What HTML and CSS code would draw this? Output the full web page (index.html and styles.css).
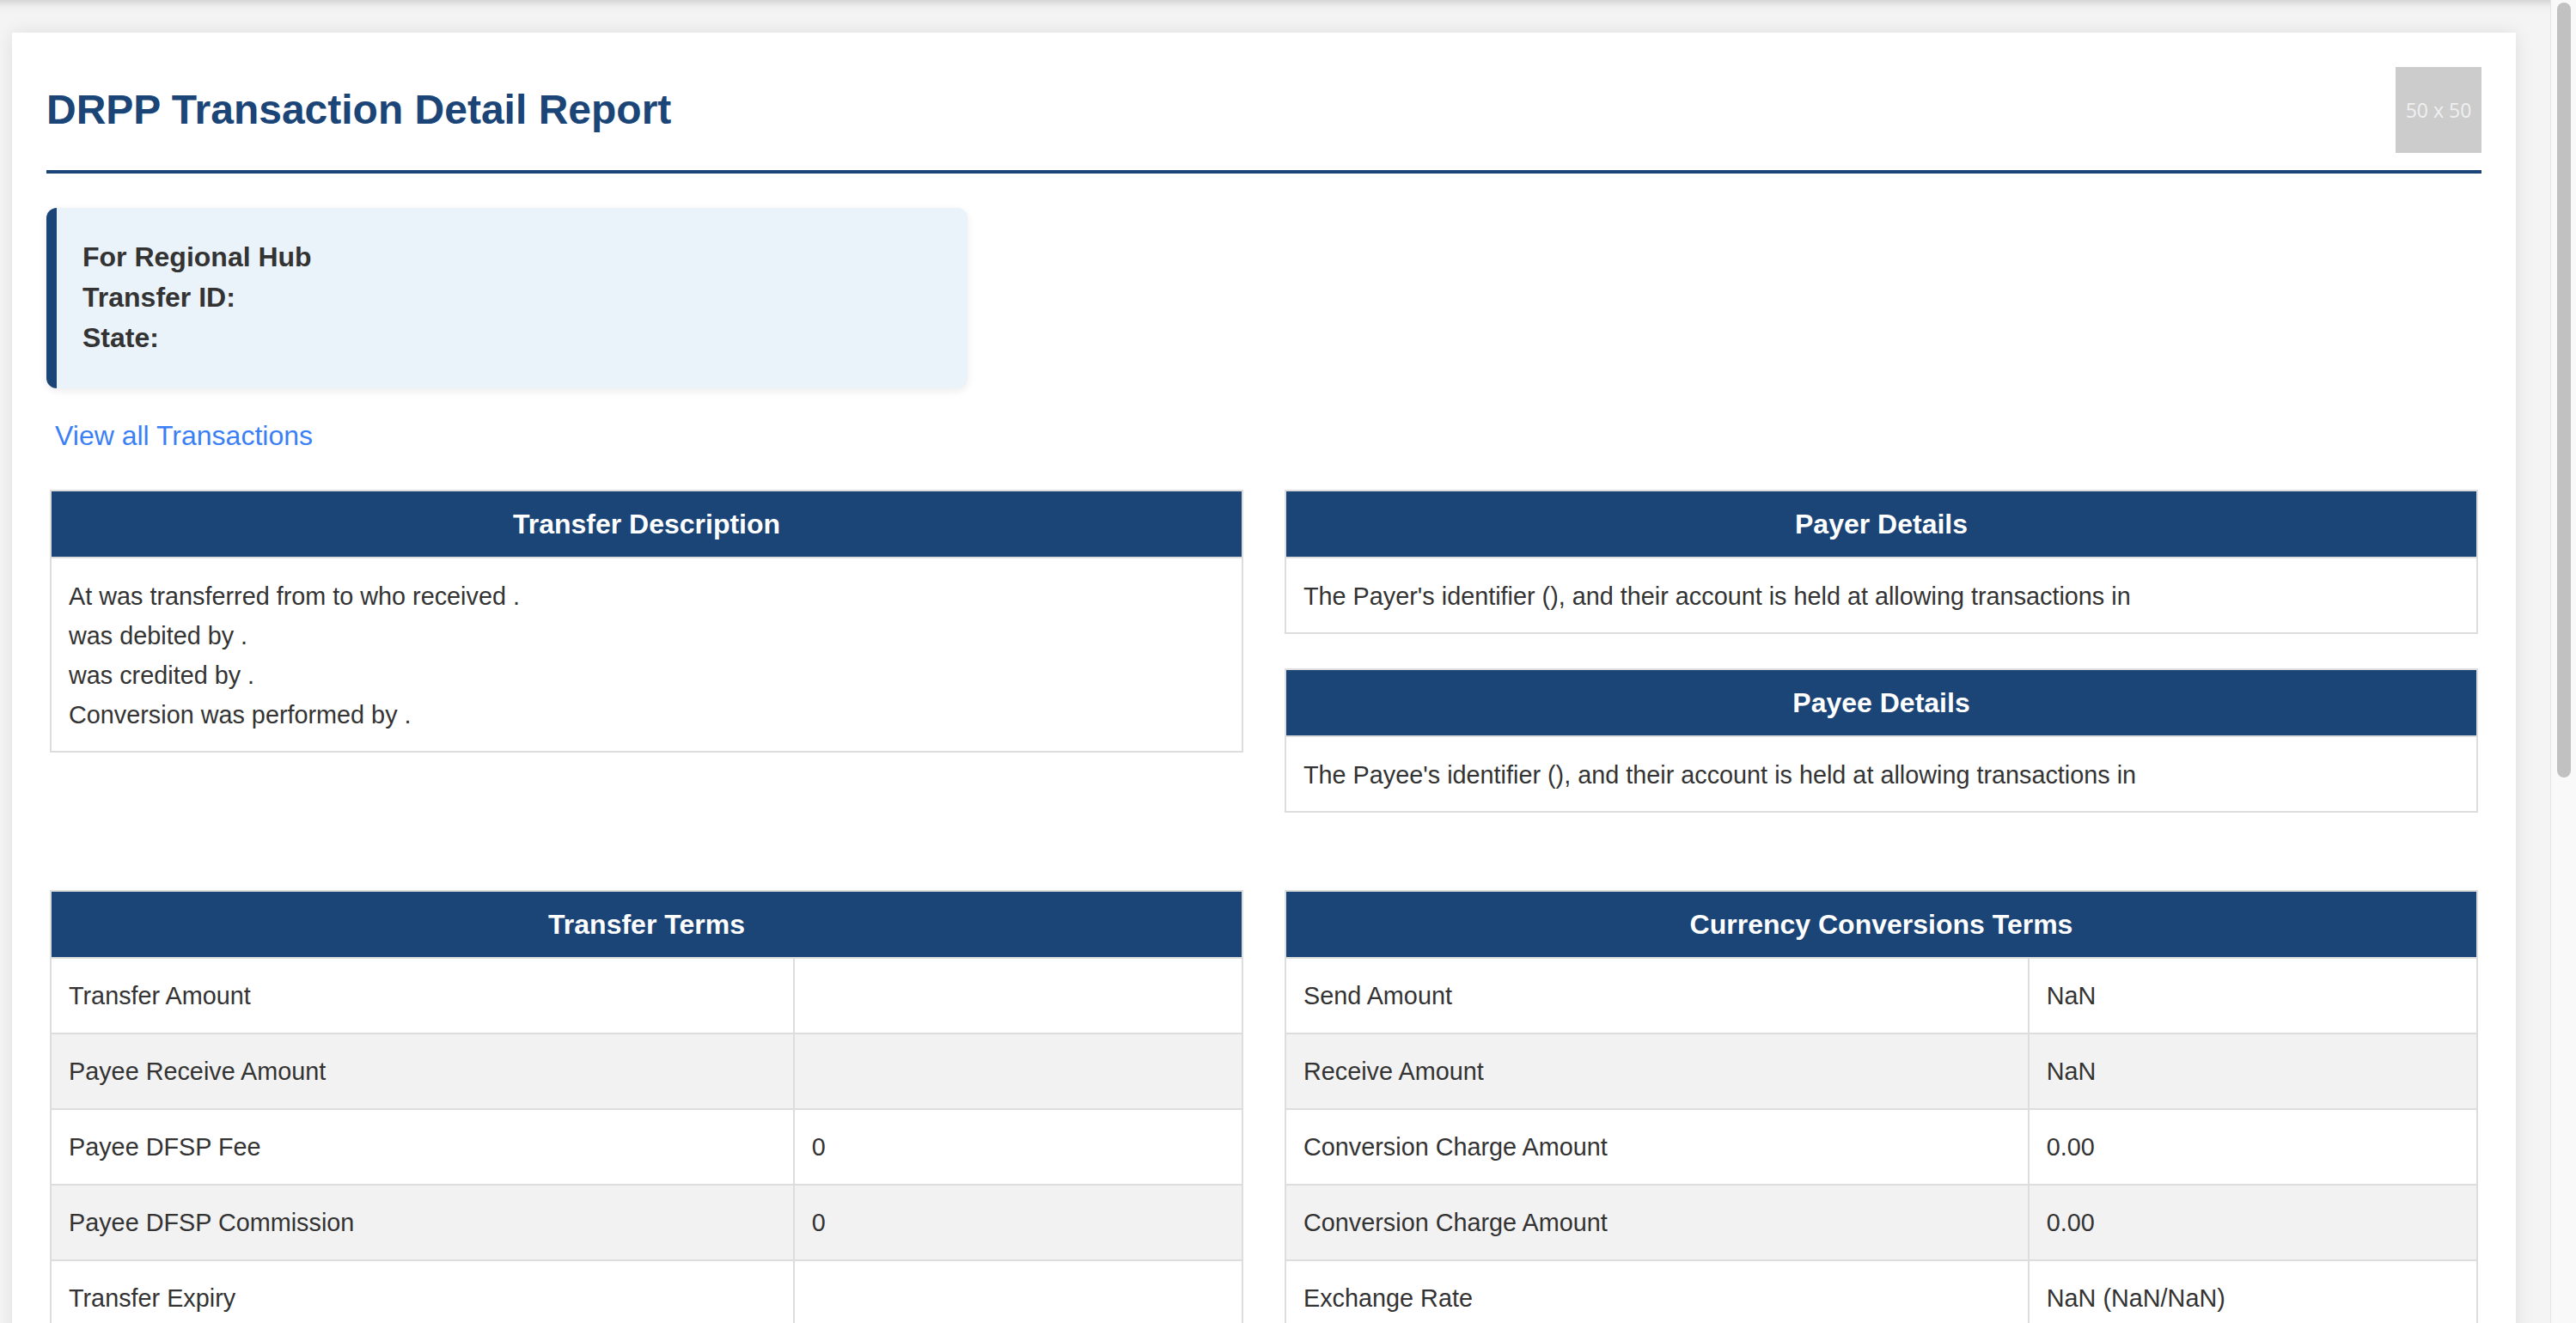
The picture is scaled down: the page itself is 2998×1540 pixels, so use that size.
FILE: index.html
```html
<!DOCTYPE html>
<html lang="en">
<head>
<meta charset="utf-8">
<title>DRPP Transaction Detail Report</title>
<link rel="stylesheet" href="styles.css">
</head>
<body>
<div class="viewport">
  <div class="card">
    <header class="report-header">
      <h1 class="report-title">DRPP Transaction Detail Report</h1>
      <div class="logo">50 x 50</div>
    </header>

    <section class="info">
      <div>For Regional Hub</div>
      <div>Transfer ID:</div>
      <div>State:</div>
    </section>

    <a class="back-link" href="#">View all Transactions</a>

    <div class="grid grid-top">
      <table class="panel">
        <thead><tr><th>Transfer Description</th></tr></thead>
        <tbody>
          <tr><td class="desc">
            <div>At was transferred from to who received .</div>
            <div>was debited by .</div>
            <div>was credited by .</div>
            <div>Conversion was performed by .</div>
          </td></tr>
        </tbody>
      </table>
      <div class="stack">
        <table class="panel">
          <thead><tr><th>Payer Details</th></tr></thead>
          <tbody><tr><td>The Payer's identifier (), and their account is held at allowing transactions in</td></tr></tbody>
        </table>
        <table class="panel">
          <thead><tr><th>Payee Details</th></tr></thead>
          <tbody><tr><td>The Payee's identifier (), and their account is held at allowing transactions in</td></tr></tbody>
        </table>
      </div>
    </div>

    <div class="grid grid-terms">
      <table class="panel terms">
        <colgroup><col class="col-label"><col class="col-value"></colgroup>
        <thead><tr><th colspan="2">Transfer Terms</th></tr></thead>
        <tbody>
          <tr><td>Transfer Amount</td><td></td></tr>
          <tr><td>Payee Receive Amount</td><td></td></tr>
          <tr><td>Payee DFSP Fee</td><td>0</td></tr>
          <tr><td>Payee DFSP Commission</td><td>0</td></tr>
          <tr><td>Transfer Expiry</td><td></td></tr>
        </tbody>
      </table>
      <table class="panel terms">
        <colgroup><col class="col-label"><col class="col-value"></colgroup>
        <thead><tr><th colspan="2">Currency Conversions Terms</th></tr></thead>
        <tbody>
          <tr><td>Send Amount</td><td>NaN</td></tr>
          <tr><td>Receive Amount</td><td>NaN</td></tr>
          <tr><td>Conversion Charge Amount</td><td>0.00</td></tr>
          <tr><td>Conversion Charge Amount</td><td>0.00</td></tr>
          <tr><td>Exchange Rate</td><td>NaN (NaN/NaN)</td></tr>
        </tbody>
      </table>
    </div>
  </div>
</div>
<div class="scrollbar"><div class="thumb"></div></div>
</body>
</html>
```

FILE: styles.css
```css
* { box-sizing: border-box; }

html, body {
  margin: 0;
  height: 1540px;
  overflow: hidden;
}

body {
  display: flex;
  font-family: "Liberation Sans", Arial, Helvetica, sans-serif;
  color: #333333;
  background: linear-gradient(to bottom, #d6d6d6 0px, #efefef 8px, #f4f4f4 16px) no-repeat, #f4f4f4;
}

.viewport {
  flex: 1 1 auto;
  min-width: 0;
  padding: 38px 0 0 14px;
  overflow: hidden;
}

.card {
  width: 2914px;
  background: #ffffff;
  box-shadow: 0 0 20px rgba(0, 0, 0, 0.09);
  padding: 40px 40px 80px 40px;
}

.report-header {
  display: flex;
  align-items: center;
  justify-content: space-between;
  padding-bottom: 20px;
  border-bottom: 4px solid #1b4477;
}

.report-title {
  margin: 0;
  font-size: 48px;
  line-height: 56px;
  font-weight: 700;
  color: #1b4477;
}

.logo {
  width: 100px;
  height: 100px;
  background: #cccccc;
  color: #f0f0f0;
  display: flex;
  align-items: center;
  justify-content: center;
  font-family: "Open Sans", "DejaVu Sans", sans-serif;
  font-size: 23px;
}

.info {
  margin-top: 40px;
  width: 1072px;
  background: #eaf2fa;
  border-left: 12px solid #1b4477;
  border-radius: 12px;
  padding: 34px 28px 35px 30px;
  font-size: 32px;
  line-height: 47px;
  font-weight: 700;
  color: #333333;
  box-shadow: 0 3px 10px rgba(0, 0, 0, 0.08);
}

.back-link {
  display: block;
  margin: 37px 0 0 10px;
  font-size: 32px;
  line-height: 37px;
  color: #3b7ff5;
  text-decoration: none;
}

.grid {
  display: grid;
  grid-template-columns: 1fr 1fr;
  column-gap: 48px;
  padding: 0 4px;
  align-items: start;
}

.grid-top { margin-top: 44px; }
.grid-terms { margin-top: 90px; }

.stack {
  display: flex;
  flex-direction: column;
  gap: 40px;
}

.panel {
  width: 100%;
  border-collapse: collapse;
  border: 2px solid #dddddd;
}

.panel th {
  background: #1b4477;
  color: #ffffff;
  font-size: 32px;
  line-height: 36px;
  font-weight: 700;
  padding: 20px;
  border: 2px solid #dddddd;
  text-align: center;
}

.panel td {
  padding: 21px 20px 19px 20px;
  border: 2px solid #dddddd;
  font-size: 28.8px;
  line-height: 46px;
  color: #333333;
  text-align: left;
  vertical-align: middle;
  background: #ffffff;
}

.terms td {
  padding-top: 20px;
  padding-bottom: 20px;
}

.terms { table-layout: fixed; }
.col-label { width: 62.35%; }

.terms tbody tr:nth-child(even) td { background: #f2f2f2; }

.scrollbar {
  flex: 0 0 30px;
  height: 1540px;
  background: #f9f9f9;
  border-left: 1px solid #e6e6e6;
  padding: 3px 6px 0 7px;
}

.thumb {
  height: 902px;
  background: #c1c1c1;
  border-radius: 8px;
}
```
